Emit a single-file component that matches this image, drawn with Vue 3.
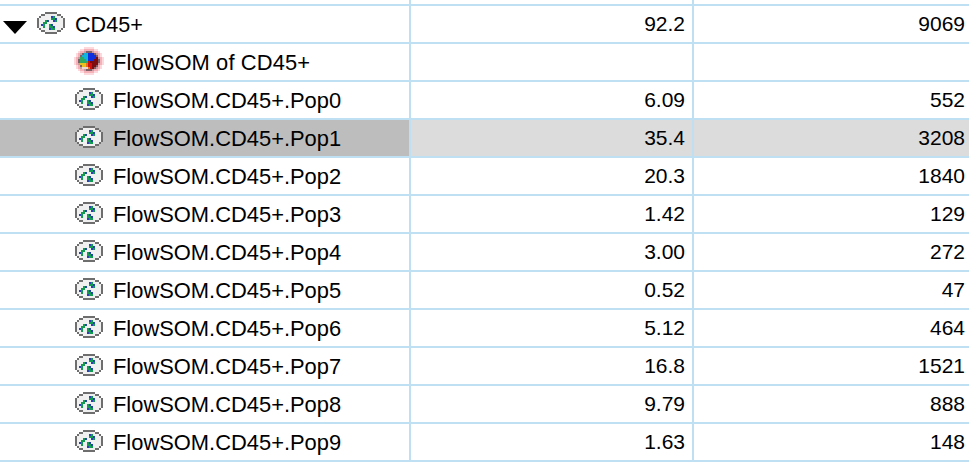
<script setup>
const rows = [
  { name: 'FlowSOM of CD45+', pct: '', count: '', kind: 'som' },
  { name: 'FlowSOM.CD45+.Pop0', pct: '6.09', count: '552' },
  { name: 'FlowSOM.CD45+.Pop1', pct: '35.4', count: '3208', selected: true },
  { name: 'FlowSOM.CD45+.Pop2', pct: '20.3', count: '1840' },
  { name: 'FlowSOM.CD45+.Pop3', pct: '1.42', count: '129' },
  { name: 'FlowSOM.CD45+.Pop4', pct: '3.00', count: '272' },
  { name: 'FlowSOM.CD45+.Pop5', pct: '0.52', count: '47' },
  { name: 'FlowSOM.CD45+.Pop6', pct: '5.12', count: '464' },
  { name: 'FlowSOM.CD45+.Pop7', pct: '16.8', count: '1521' },
  { name: 'FlowSOM.CD45+.Pop8', pct: '9.79', count: '888' },
  { name: 'FlowSOM.CD45+.Pop9', pct: '1.63', count: '148' }
]

const palette = {
  d: '#6e6e6e', L: '#f0f0f0', b: '#2a3fb0', g: '#129a50',
  p: '#fbd9dc', P: '#f6b0b8', q: '#c89aa2', k: '#806068', c: '#10b4d8', B: '#1030e0',
  R: '#d01010', D: '#7c0c10', G: '#30a860', Y: '#e8c020', O: '#e87020', W: '#ecd8d0'
}

function toPixels(map) {
  const out = []
  map.forEach((line, y) => {
    ;[...line].forEach((ch, x) => {
      if (palette[ch]) out.push({ x, y, fill: palette[ch] })
    })
  })
  return out
}

const gatePixels = toPixels([
  '....dddddd....',
  '..ddLLLLLLdd..',
  '.dLLLLLbgLLLd.',
  'dLLLLLLggbLLLd',
  'dLLLgbLLbgLLLd',
  'dLLggLLLLLLLLd',
  'dLbgLLgbLLLLLd',
  'dLLgLLggbLLLLd',
  '.dLLLLbggLLLd.',
  '..ddLLLLLLdd..',
  '....dddddd....'
])

const somPixels = toPixels([
  '.....ppppp.....',
  '...ppPPPPPpp...',
  '..pPPqkkkqPPp..',
  '.pPqkccBBBkqPp.',
  '.pPkcccBBBBkPp.',
  'pPqGGccBBBBDqPp',
  'pPkGGGcBBBDDkPp',
  'pPkGGGGRDDDDkPp',
  'pPqYYYORRDDDqPp',
  '.pPkYYORRDDkPp.',
  '.pPqWWWORDkqPp.',
  '..pPPqkkkqPPp..',
  '...ppPPPPPpp...',
  '.....ppppp.....'
])
</script>

<template>
  <div class="table">
    <div class="row top">
      <div class="cell name"></div>
      <div class="cell num"></div>
      <div class="cell num last"></div>
    </div>
    <div class="row">
      <div class="cell name parent">
        <svg class="arrow" width="24" height="13" viewBox="0 0 24 13"><path d="M0 0H24L12 13Z" fill="#000" /></svg>
        <svg class="gate" width="28" height="22" viewBox="0 0 14 11" shape-rendering="crispEdges">
          <rect v-for="(p, i) in gatePixels" :key="i" :x="p.x" :y="p.y" width="1" height="1" :fill="p.fill" />
        </svg>
        <span class="label">CD45+</span>
      </div>
      <div class="cell num">92.2</div>
      <div class="cell num last">9069</div>
    </div>
    <div v-for="r in rows" :key="r.name" class="row" :class="{ selected: r.selected }">
      <div class="cell name child">
        <svg v-if="r.kind === 'som'" class="gate som" width="30" height="28" viewBox="0 0 15 14" shape-rendering="crispEdges">
          <rect v-for="(p, i) in somPixels" :key="i" :x="p.x" :y="p.y" width="1" height="1" :fill="p.fill" />
        </svg>
        <svg v-else class="gate" width="28" height="22" viewBox="0 0 14 11" shape-rendering="crispEdges">
          <rect v-for="(p, i) in gatePixels" :key="i" :x="p.x" :y="p.y" width="1" height="1" :fill="p.fill" />
        </svg>
        <span class="label" :class="{ wide: r.kind === 'som' }">{{ r.name }}</span>
      </div>
      <div class="cell num">{{ r.pct }}</div>
      <div class="cell num last">{{ r.count }}</div>
    </div>
  </div>
</template>

<style scoped>
.table {
  width: 969px;
  height: 463px;
  overflow: hidden;
  background: #fff;
  color: #000;
  font-family: "Liberation Sans", Arial, sans-serif;
  font-size: 21px;
}
.row {
  display: grid;
  grid-template-columns: 411px 283px 275px;
  height: 38px;
}
.row.top {
  height: 6px;
}
.cell {
  display: flex;
  align-items: center;
  border-right: 2px solid #bfe0f2;
  border-bottom: 2px solid #bfe0f2;
  min-width: 0;
}
.num {
  justify-content: flex-end;
  padding-right: 7px;
}
.last {
  border-right: none;
  padding-right: 4px;
}
.name {
  white-space: nowrap;
}
.label {
  margin-top: 2px;
}
.wide {
  letter-spacing: 0.12px;
}
.parent {
  padding-left: 3px;
  font-size: 21.6px;
}
.arrow {
  margin-right: 10px;
  margin-top: 6px;
}
.parent .gate {
  margin-right: 10px;
  margin-top: -3px;
}
.child {
  padding-left: 75px;
  font-size: 21.9px;
}
.child .gate {
  margin-right: 10px;
  margin-top: -3px;
  flex: none;
}
.child .som {
  margin-left: -1px;
  margin-right: 9px;
  margin-top: -3px;
}
.selected .cell {
  background: #dcdcdc;
}
.selected .name {
  background: #bdbdbd;
}
</style>
